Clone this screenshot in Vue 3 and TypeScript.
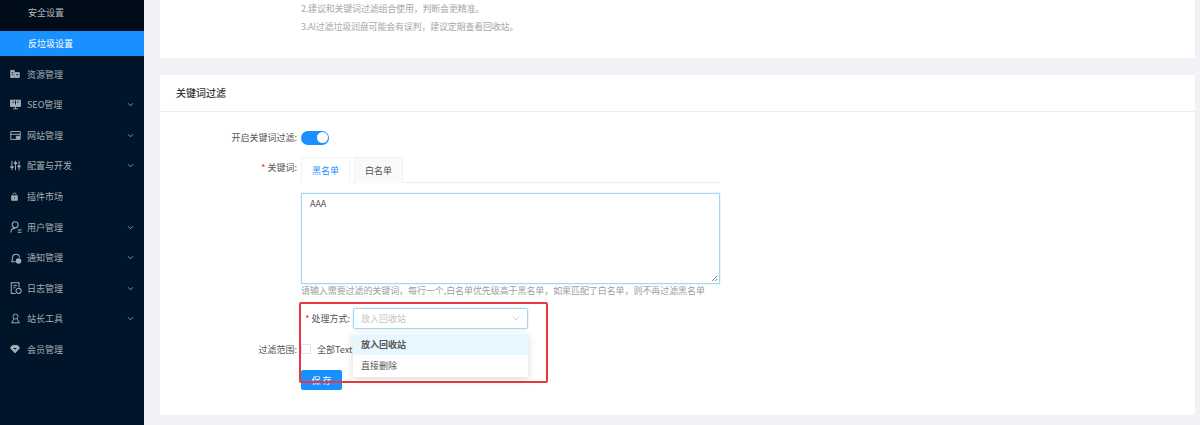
<script setup lang="ts">
interface MenuItem { label: string; icon: string; arrow: boolean; size: number }
const menu: MenuItem[] = [
  { label: '资源管理', icon: 'res', arrow: false, size: 10 },
  { label: 'SEO管理', icon: 'seo', arrow: true, size: 11 },
  { label: '网站管理', icon: 'site', arrow: true, size: 11 },
  { label: '配置与开发', icon: 'dev', arrow: true, size: 11 },
  { label: '插件市场', icon: 'lock', arrow: false, size: 9 },
  { label: '用户管理', icon: 'user', arrow: true, size: 12 },
  { label: '通知管理', icon: 'bell', arrow: true, size: 12 },
  { label: '日志管理', icon: 'log', arrow: true, size: 12 },
  { label: '站长工具', icon: 'tool', arrow: true, size: 11 },
  { label: '会员管理', icon: 'gem', arrow: false, size: 10 },
]
</script>

<template>
  <div class="page">
    <aside class="side">
      <div class="sub dark">安全设置</div>
      <div class="sub active">反垃圾设置</div>
      <div class="menu">
        <div v-for="m in menu" :key="m.label" class="item">
          <span class="ico-box">
            <svg viewBox="0 0 14 14" :width="m.size" :height="m.size" fill="none" stroke="#a6adb4" stroke-width="1.2">
              <template v-if="m.icon === 'res'"><path d="M1 2h5v10H1z" fill="#a6adb4" /><path d="M7 5h6v7H7z" fill="#a6adb4" /><path d="M2.500 5h2M2.500 8h2M8.500 8h3" stroke="#001529" /></template>
              <template v-else-if="m.icon === 'seo'"><path d="M0.500 1.500h13v8h-13z" fill="#a6adb4" /><path d="M7 2v5M3 4h2M9 4h2" stroke="#001529" /><path d="M7 9.500v3M4 12.500h6" /></template>
              <template v-else-if="m.icon === 'site'"><path d="M1 2h12v10H1zM1 5.500h12" /><path d="M8 8h4v3H8z" fill="#a6adb4" /></template>
              <template v-else-if="m.icon === 'dev'"><path d="M2.500 1v12M7 1v12M11.500 1v12" /><path d="M0.500 9h4M5 4h4M9.500 8h4" stroke-width="2.200" /></template>
              <template v-else-if="m.icon === 'lock'"><path d="M4.500 6V4a2.500 2.500 0 0 1 5 0v2" /><path d="M2.500 6h9v7h-9z" fill="#a6adb4" /><path d="M7 8.500v2" stroke="#001529" /></template>
              <template v-else-if="m.icon === 'user'"><circle cx="6" cy="4.500" r="3.500" /><path d="M1 13.500c0-3.500 2-5 5-5M9 10.500h4.500M9 13h4.500" /></template>
              <template v-else-if="m.icon === 'bell'"><path d="M1.500 11.500c1-1 1.500-2.500 1.500-5a4 4 0 0 1 8 0M1.500 11.500h5" /><circle cx="10" cy="10.500" r="2.600" fill="#a6adb4" /></template>
              <template v-else-if="m.icon === 'log'"><path d="M6.500 13.500H1.500V1h9v5M4 4h4M4 6.800h2.500" /><circle cx="10" cy="10.300" r="3" /></template>
              <template v-else-if="m.icon === 'tool'"><circle cx="7" cy="4.500" r="3.200" /><path d="M5 7.500L2 12.500h10L9 7.500" /></template>
              <template v-else><path d="M3.500 2h7L13.500 5.500 7 12.500 .5 5.500z" fill="#a6adb4" /><path d="M4.500 5.500h5L7 8.200z" fill="#001529" stroke="none" /></template>
            </svg>
          </span>
          <span class="label">{{ m.label }}</span>
          <svg v-if="m.arrow" viewBox="0 0 8 6" width="7" height="5" fill="none" stroke="#8c96a0" stroke-width="1.200"><path d="M1 1.500l3 3 3-3" /></svg>
        </div>
      </div>
    </aside>

    <main class="main">
      <section class="card top">
        <p class="note">2.建议和关键词过滤组合使用，判断会更精准。</p>
        <p class="note">3.AI过滤垃圾润盘可能会有误判，建议定期查看回收站。</p>
      </section>

      <section class="card form">
        <h2 class="title">关键词过滤</h2>
        <div class="body">
          <div class="row switch-row">
            <label class="lab">开启关键词过滤:</label>
            <span class="switch"><i></i></span>
          </div>
          <div class="row tabs-row">
            <label class="lab"><b>*</b> 关键词:</label>
            <div class="tabs">
              <span class="tab on">黑名单</span>
              <span class="tab">白名单</span>
            </div>
          </div>
          <div class="field">
            <div class="textarea">AAA
              <svg class="grip" viewBox="0 0 8 8" width="7" height="7" stroke="#777" fill="none"><path d="M1 7l6-6M4.500 7L7 4.500" /></svg>
            </div>
            <p class="hint">请输入需要过滤的关键词，每行一个,白名单优先级高于黑名单，如果匹配了白名单，则不再过滤黑名单</p>
          </div>
          <div class="row method-row">
            <label class="lab wide"><b>*</b> 处理方式:</label>
            <div class="select">
              <span>放入回收站</span>
              <svg viewBox="0 0 12 8" width="8" height="5" fill="none" stroke="#b5bcc4"><path d="M1 1l5 5.500L11 1" /></svg>
            </div>
          </div>
          <div class="row range-row">
            <label class="lab">过滤范围:</label>
            <span class="check"></span>
            <span class="check-text">全部Text</span>
          </div>
          <div class="field">
            <button class="save">保 存</button>
          </div>

          <div class="dropdown">
            <div class="opt sel">放入回收站</div>
            <div class="opt">直接删除</div>
          </div>
          <div class="redbox"></div>
        </div>
      </section>
    </main>
  </div>
</template>

<style>
html, body { margin: 0; overflow: hidden; }
</style>

<style scoped>
.page {
  width: 1200px;
  height: 425px;
  display: flex;
  overflow: hidden;
  font-family: "Noto Sans CJK SC", "Liberation Sans", sans-serif;
  font-size: 9px;
  color: #555;
  background: #f0f2f5;
}
.side { width: 144px; flex: none; background: #001529; }
.sub { padding-left: 28px; color: #b4bac1; }
.sub.dark { height: 31px; line-height: 26px; background: #000c17; }
.sub.active { height: 25px; line-height: 25px; background: #1890ff; color: #fff; }
.menu { padding-top: 3px; }
.item { height: 30.550px; display: flex; align-items: center; padding: 0 10px; color: #a6adb4; }
.ico-box { flex: none; width: 17px; display: flex; align-items: center; }
.label { flex: 1; }
.main { flex: 1; padding: 0 5px 0 16px; }
.card { background: #fff; }
.top { height: 58px; margin-bottom: 17px; padding-left: 141px; }
.note { margin: 0; height: 17.500px; line-height: 17.500px; color: #a8a8a8; letter-spacing: -.2px; }
.form { height: 340px; }
.title { margin: 0; height: 36px; line-height: 36px; padding-left: 16px; border-bottom: 1px solid #eee; font-size: 10px; font-weight: 500; color: #333; }
.body { position: relative; padding-top: 18px; }
.row { display: flex; align-items: center; }
.lab { flex: none; width: 137px; margin-right: 4px; text-align: right; white-space: nowrap; color: #555; }
.lab.wide { width: 190px; margin-right: 3px; }
.lab b { color: #f5222d; font-weight: 400; }
.field { padding-left: 141px; }
.switch-row { height: 15px; margin-bottom: 12px; }
.switch { width: 28px; height: 14px; border-radius: 7px; background: #1890ff; position: relative; }
.switch i { position: absolute; right: 1.500px; top: 1.500px; width: 11px; height: 11px; border-radius: 50%; background: #fff; }
.tabs-row { height: 26px; align-items: flex-start; margin-bottom: 10px; }
.tabs-row .lab { line-height: 21px; }
.tabs { display: flex; width: 419px; border-bottom: 1px solid #eee; height: 26px; box-sizing: border-box; }
.tab { width: 49px; height: 26px; margin-right: 4px; line-height: 25px; text-align: center; background: #fafafa; border: 1px solid #f3f3f3; border-bottom: none; box-sizing: border-box; }
.tab.on { background: #fff; color: #1890ff; }
.textarea { position: relative; box-sizing: border-box; width: 419px; height: 91px; border: 1px solid #a3d8f8; box-shadow: 0 0 0 .5px #d4edfc; padding: 3px 8px; color: #555; }
.grip { position: absolute; right: 1px; bottom: 1px; }
.hint { margin: 0 0 12px; height: 12px; line-height: 13px; color: #a0a0a0; white-space: nowrap; letter-spacing: -.08px; }
.method-row { height: 21px; }
.select { box-sizing: border-box; width: 175px; height: 21px; border: 1px solid #a3d8f8; box-shadow: 0 0 0 .5px #d4edfc; border-radius: 2px; display: flex; align-items: center; justify-content: space-between; padding: 0 7px; color: #c4c4c4; }
.range-row { height: 16px; margin-top: 12px; margin-bottom: 13px; }
.check { width: 10px; height: 10px; border: 1px solid #e4e4e4; border-radius: 1px; box-sizing: border-box; }
.check-text { margin-left: 6px; }
.save { display: block; width: 41px; height: 20px; padding: 0; border: none; border-radius: 2px; background: #1890ff; color: #fff; font: inherit; }
.dropdown { position: absolute; left: 193px; top: 221px; width: 175px; padding: 1px 0; background: #fff; box-shadow: 0 2px 8px rgba(0, 0, 0, .15); }
.opt { height: 21px; line-height: 21px; padding-left: 8px; color: #555; }
.opt.sel { background: #e6f7ff; font-weight: 600; }
.redbox { position: absolute; left: 139px; top: 190px; width: 249px; height: 81px; border: 2px solid #e6393f; border-radius: 2px; box-sizing: border-box; pointer-events: none; }
</style>
